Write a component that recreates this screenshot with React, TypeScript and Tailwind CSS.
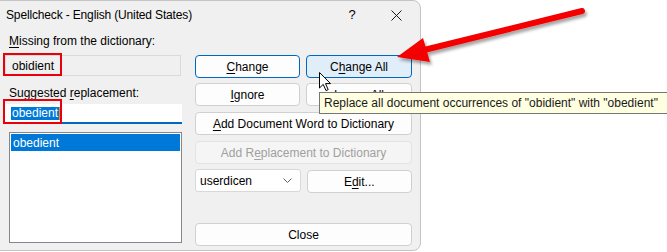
import React from 'react';

const font = { fontFamily: '"Liberation Sans", Arial, sans-serif' };

function U({ children }: { children: React.ReactNode }) {
  return <span className="underline underline-offset-2 decoration-1">{children}</span>;
}

function Btn({
  children,
  className = '',
}: {
  children: React.ReactNode;
  className?: string;
}) {
  return (
    <div
      className={`flex h-[23px] items-center justify-center rounded-[4px] border text-[12px] ${className}`}
    >
      {children}
    </div>
  );
}

function CloseGlyph() {
  return (
    <svg width="11" height="11" viewBox="0 0 11 11">
      <path d="M0.5 0.5 L10.5 10.5 M10.5 0.5 L0.5 10.5" stroke="#1a1a1a" strokeWidth="1" />
    </svg>
  );
}

function Overlays() {
  return (
    <svg className="pointer-events-none absolute left-0 top-0" width="667" height="252">
      <defs>
        <filter id="sh" x="-20%" y="-50%" width="140%" height="200%">
          <feDropShadow dx="2" dy="3" stdDeviation="1.6" floodColor="#000" floodOpacity="0.35" />
        </filter>
      </defs>
      <g filter="url(#sh)">
        <line x1="582" y1="11" x2="420" y2="51" stroke="#f40000" strokeWidth="6" strokeLinecap="round" />
        <polygon points="397,57 423,38 430,62" fill="#f40000" />
      </g>
    </svg>
  );
}

function Cursor() {
  return (
    <svg className="pointer-events-none absolute left-[319px] top-[72px]" width="13" height="20" viewBox="0 0 13 20">
      <path
        d="M0.5 0.5 L0.5 16 L4.2 12.4 L7 18.6 L9.2 17.6 L6.5 11.6 L11.5 11.6 Z"
        fill="#fff"
        stroke="#000"
        strokeWidth="1"
        strokeLinejoin="round"
      />
    </svg>
  );
}

export default function App() {
  return (
    <div className="relative h-[252px] w-[667px] overflow-hidden bg-white text-black" style={font}>
      <div className="ml-[-1px] h-[251px] w-[422px] rounded-r-[8px] border border-[#c4c4c4] bg-[#f0f0f0]">
        {/* title bar */}
        <div className="flex h-[28px] items-center pl-[6px] text-[12px]">
          <span className="flex-1 tracking-[-0.15px]">Spellcheck - English (United States)</span>
          <span className="w-[12px] text-center text-[13px]">?</span>
          <span className="ml-[33px] mr-[18px] flex">
            <CloseGlyph />
          </span>
        </div>

        <div className="flex">
          {/* left column */}
          <div className="ml-[5px] flex w-[177px] flex-col">
            <div className="mt-[4px] h-[16px] pl-[4px] text-[12px] leading-[16px]">
              <U>M</U>issing from the dictionary:
            </div>
            <div className="mt-[6px] flex h-[21px] w-[176px] items-center border border-[#dadada] bg-[#f0f0f0] pl-[6px] text-[12px]">
              obidient
            </div>
            <div className="mt-[9px] h-[16px] pl-[4px] text-[12px] leading-[16px]">
              Suggested <U>r</U>eplacement:
            </div>
            <div className="mt-[3px] flex h-[20px] w-[177px] items-center border-b-2 border-[#0067c0] bg-white pl-[6px] text-[12px]">
              <span className="bg-[#0078d7] px-[1px] leading-[13px] text-white">obedient</span>
              <span className="h-[13px] w-[1px] bg-[#e88a2c]" />
            </div>
            <div className="ml-[4px] mt-[8px] h-[111px] w-[173px] border border-[#828790] bg-white p-[1px]">
              <div className="flex h-[17px] items-center bg-[#0078d7] pl-[2px] text-[12px] text-white">obedient</div>
            </div>
          </div>

          {/* right column */}
          <div className="ml-[13px] flex w-[217px] flex-col">
            <div className="mt-[26px] flex gap-[6px]">
              <Btn className="w-[105px] border-[#0067c0] bg-[#fdfdfd]">
                <U>C</U>hange
              </Btn>
              <Btn className="w-[106px] border-[#0067c0] bg-[#e0eef9]">
                C<U>h</U>ange All
              </Btn>
            </div>
            <div className="mt-[5px] flex gap-[6px]">
              <Btn className="w-[105px] border-[#d0d0d0] bg-[#fdfdfd]">
                <U>I</U>gnore
              </Btn>
              <Btn className="w-[106px] border-[#d0d0d0] bg-[#fdfdfd]">
                I<U>g</U>nore All
              </Btn>
            </div>
            <Btn className="mt-[6px] w-[217px] border-[#d0d0d0] bg-[#fdfdfd]">
              <U>A</U>dd Document Word to Dictionary
            </Btn>
            <Btn className="mt-[6px] w-[217px] border-[#e3e3e3] bg-[#f5f5f5] text-[#a0a0a0]">
              Add R<U>e</U>placement to Dictionary
            </Btn>
            <div className="mt-[5px] flex gap-[6px]">
              <div className="flex h-[23px] w-[106px] items-center justify-between rounded-[3px] border border-[#d8d8d8] bg-white pl-[4px] pr-[8px] text-[12px]">
                <span>userdicen</span>
                <svg width="9" height="5" viewBox="0 0 9 5">
                  <path d="M0.5 0.5 L4.5 4.5 L8.5 0.5" fill="none" stroke="#606060" strokeWidth="1" />
                </svg>
              </div>
              <Btn className="mt-[1px] w-[106px] border-[#d0d0d0] bg-[#fdfdfd]">
                E<U>d</U>it...
              </Btn>
            </div>
            <Btn className="mt-[30px] w-[217px] border-[#d0d0d0] bg-[#fdfdfd]">Close</Btn>
          </div>
        </div>
      </div>

      {/* tooltip */}
      <div className="absolute left-[319px] top-[92px] flex h-[22px] w-[350px] items-center border border-[#767676] bg-[#ffffe1] pl-[4px] text-[12px] text-[#1a1a1a]">
        Replace all document occurrences of "obidient" with "obedient"
      </div>

      {/* red annotation boxes */}
      <div className="absolute left-[3px] top-[53px] h-[23px] w-[59px] border-2 border-[#e8000b]" />
      <div className="absolute left-[3px] top-[99px] h-[25px] w-[59px] border-2 border-[#e8000b]" />

      <Overlays />
      <Cursor />
    </div>
  );
}
